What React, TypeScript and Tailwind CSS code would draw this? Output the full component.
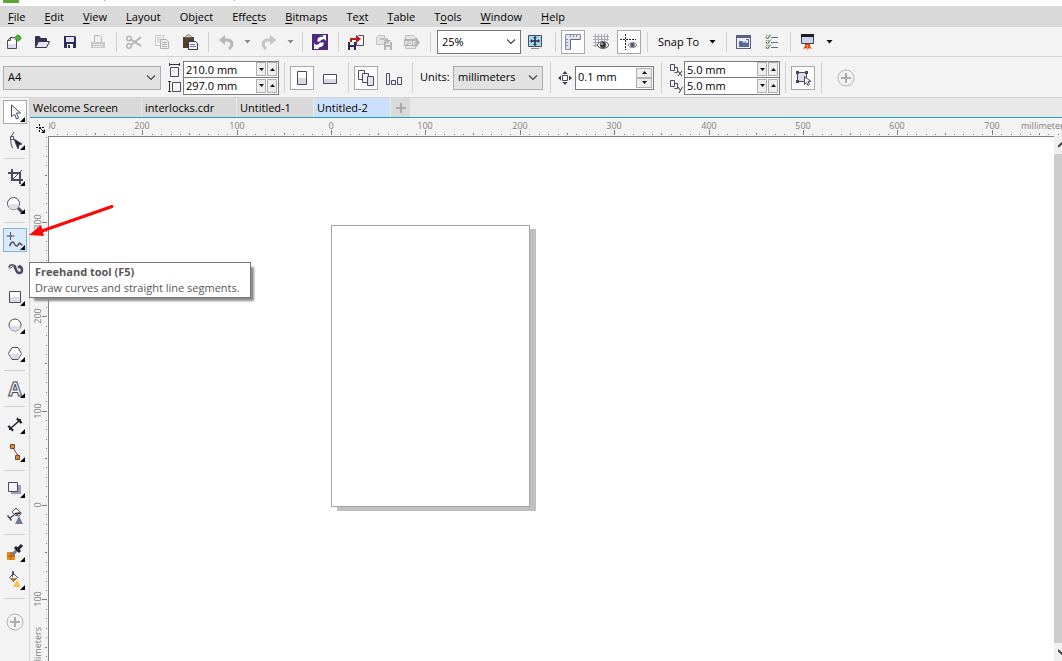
import React from 'react';
import { clsx } from 'clsx';

const INK = '#4a4a62';
const MUTED = '#b4b4b4';

interface IconProps {
  children: React.ReactNode;
  size?: number;
}

const Icon: React.FC<IconProps> = ({ children, size = 16 }) => (
  <svg
    width={size}
    height={size}
    viewBox={`0 0 ${size} ${size}`}
    fill="none"
    stroke={INK}
    className="block shrink-0"
    aria-hidden="true"
  >
    {children}
  </svg>
);

interface ToolButtonProps {
  label: string;
  boxed?: boolean;
  children: React.ReactNode;
}

const ToolButton: React.FC<ToolButtonProps> = ({ label, boxed, children }) => (
  <button type="button" aria-label={label} className="flex h-7 w-7 shrink-0 items-center justify-center">
    <span
      className={clsx(
        'flex h-6 w-6 items-center justify-center border',
        boxed ? 'border-[#a9a9a9] bg-[#fdfdfd]' : 'border-transparent'
      )}
    >
      {children}
    </span>
  </button>
);

const Caret: React.FC<{ color?: string }> = ({ color = '#000' }) => (
  <svg width="7" height="4" viewBox="0 0 7 4" className="shrink-0" aria-hidden="true">
    <path d="M0.5 0h6L3.5 3.5z" fill={color} />
  </svg>
);

const CaretButton: React.FC<{ label: string; wide?: boolean; color?: string }> = ({ label, wide, color }) => (
  <button
    type="button"
    aria-label={label}
    className={clsx('flex h-7 shrink-0 items-center justify-center', wide ? 'w-4' : 'w-3.5')}
  >
    <Caret color={color} />
  </button>
);

const Separator: React.FC<{ className?: string }> = ({ className }) => (
  <div className={clsx('flex w-2 shrink-0 justify-center self-stretch py-1', className)}>
    <div className="w-px bg-[#d0d0d0]" />
  </div>
);

const Chevron: React.FC = () => (
  <svg
    width="10"
    height="6"
    viewBox="0 0 10 6"
    fill="none"
    stroke="#444"
    className="pointer-events-none absolute top-1/2 right-1 -translate-y-1/2"
    aria-hidden="true"
  >
    <path d="M1 0.5l4 4 4-4" strokeWidth="1.2" />
  </svg>
);

interface PickerProps {
  label: string;
  options: string[];
  className: string;
}

const Picker: React.FC<PickerProps> = ({ label, options, className }) => (
  <div className={clsx('relative h-6 shrink-0 border', className)}>
    <select aria-label={label} className="block h-full w-full appearance-none bg-transparent px-1 outline-none">
      {options.map((option) => (
        <option key={option}>{option}</option>
      ))}
    </select>
    <Chevron />
  </div>
);

const SpinArrow: React.FC<{ up?: boolean }> = ({ up }) => (
  <svg width="5" height="3" viewBox="0 0 5 3" aria-hidden="true">
    <path d={up ? 'M0 3h5L2.5 0z' : 'M0 0h5L2.5 3z'} fill="#111" />
  </svg>
);

const SpinField: React.FC<{ label: string; value: string }> = ({ label, value }) => (
  <div className="flex h-4 items-center gap-px bg-white pr-px">
    <input
      aria-label={label}
      defaultValue={value}
      className="h-full w-full min-w-0 flex-1 bg-transparent px-0.5 leading-4 outline-none"
    />
    {[false, true].map((up) => (
      <button
        key={String(up)}
        type="button"
        aria-label={`${up ? 'Increase' : 'Decrease'} ${label}`}
        className="flex h-3.5 w-2.5 items-center justify-center border border-[#b0b0b0] bg-[#eeeeee]"
      >
        <SpinArrow up={up} />
      </button>
    ))}
  </div>
);

const SpinPair: React.FC<{ fields: [string, string][] }> = ({ fields }) => (
  <div className="w-24 shrink-0 divide-y divide-[#7a7a7a] border border-[#7a7a7a]">
    {fields.map(([label, value]) => (
      <SpinField key={label} label={label} value={value} />
    ))}
  </div>
);

/* ---------- menu ---------- */

// [text, index of the underlined letter]
const MENU: [string, number][] = [
  ['File', 0],
  ['Edit', 0],
  ['View', 0],
  ['Layout', 0],
  ['Object', 2],
  ['Effects', 4],
  ['Bitmaps', 0],
  ['Text', 2],
  ['Table', 0],
  ['Tools', 1],
  ['Window', 0],
  ['Help', 0],
];

const TitleBar: React.FC = () => (
  <header className="flex h-1.5 shrink-0 items-end gap-1.5 overflow-hidden bg-white pb-[3px] pl-[3px]">
    <div className="h-4 w-4 shrink-0 bg-[#5aa832]" />
    <span className="leading-4 whitespace-nowrap">CorelDRAW X8 (64-Bit Evaluation Version)</span>
  </header>
);

const MenuBar: React.FC = () => (
  <nav className="flex h-[21px] shrink-0 items-center gap-[19px] bg-[#d9d9d9] pt-px pl-2">
    {MENU.map(([text, key]) => (
      <button key={text} type="button" className="leading-4">
        {text.slice(0, key)}
        <span className="underline underline-offset-2">{text[key]}</span>
        {text.slice(key + 1)}
      </button>
    ))}
  </nav>
);

/* ---------- standard toolbar ---------- */

const StandardBar: React.FC = () => (
  <div className="flex h-[30px] shrink-0 items-center border-b border-[#d4d4d4] bg-[#f3f3f3] pt-px">
    <ToolButton label="New">
      <Icon>
        <path d="M1.5 6.5l3-3h6v11h-9z" fill="#fff" />
        <path d="M2 10h8v4H2z" fill="#dcdce8" stroke="none" />
        <path d="M1.5 6.5h3v-3" />
        <circle cx="12" cy="4" r="3" fill="#2f9a1c" stroke="none" />
        <path d="M12 0v8M8 4h8" stroke="#5cbf45" />
      </Icon>
    </ToolButton>
    <ToolButton label="Open">
      <Icon>
        <path d="M1.5 13.5v-11h4l1 2h6v3" fill="#33334c" stroke="#33334c" />
        <path d="M1.5 13.5l3-6h11l-3 6z" fill="#e6e6f2" stroke="#33334c" />
      </Icon>
    </ToolButton>
    <ToolButton label="Save">
      <Icon>
        <path d="M2 2h11l1 1v11H2z" fill="#2c2c5a" stroke="none" />
        <path d="M4 3h8v5H4z" fill="#e4e4ee" stroke="none" />
        <path d="M5 10h6v4H5z" fill="#fff" stroke="none" />
        <path d="M6 11h2v3H6z" fill="#2c2c5a" stroke="none" />
      </Icon>
    </ToolButton>
    <ToolButton label="Print">
      <Icon>
        <path d="M4.5 8V1.5h5l2 2V8" stroke={MUTED} fill="#efefef" />
        <path d="M1 8h14v6H1z" fill="#c6c6c6" stroke="none" />
        <path d="M3 10.5h10M3 12.5h10" stroke="#e9e9e9" />
      </Icon>
    </ToolButton>
    <Separator />
    <ToolButton label="Cut">
      <Icon>
        <circle cx="3" cy="4.5" r="2.2" stroke={MUTED} strokeWidth="1.5" />
        <circle cx="3" cy="12" r="2.2" stroke={MUTED} strokeWidth="1.5" />
        <path d="M5 5.5L15 12M5 11L15 3" stroke={MUTED} strokeWidth="2" />
      </Icon>
    </ToolButton>
    <ToolButton label="Copy">
      <Icon>
        <path d="M1.5 1.5h8v10h-8zM3 4h5M3 6h3M3 8h3" stroke="#cacaca" />
        <path d="M6.5 5.5h6l2 2v7h-8z" fill="#ececec" stroke={MUTED} />
        <path d="M8 8.5h5M8 10.5h5M8 12.5h5" stroke={MUTED} />
      </Icon>
    </ToolButton>
    <ToolButton label="Paste">
      <Icon>
        <path d="M1 3h11v11H1z" fill="#51402f" stroke="none" />
        <path d="M3.5 3.5C4 0 9 0 9.5 3.5z" fill="#cfe0b8" stroke="#62704f" />
        <path d="M6.5 7.5h7l2 2v6h-9z" fill="#f3f3fa" stroke="#33334c" />
        <path d="M8 10.5h5M8 12.5h6" stroke="#77778f" />
      </Icon>
    </ToolButton>
    <Separator />
    <ToolButton label="Undo">
      <Icon>
        <path d="M1 6l6-5v10z" fill="#b8b8b8" stroke="none" />
        <path d="M6 6h3c5 0 7 5 2 9" stroke="#b8b8b8" strokeWidth="3" />
      </Icon>
    </ToolButton>
    <CaretButton label="Undo list" color="#888" />
    <ToolButton label="Redo">
      <Icon>
        <path d="M16 6l-6-5v10z" fill="#c4c4c4" stroke="none" />
        <path d="M11 6H8c-5 0-7 5-2 9" stroke="#c4c4c4" strokeWidth="3" />
      </Icon>
    </ToolButton>
    <CaretButton label="Redo list" wide color="#888" />
    <Separator />
    <ToolButton label="Search content">
      <Icon>
        <path d="M0 0h16v16H0z" fill="#4d2a78" stroke="none" />
        <path d="M14 1v6l-2-2-3 1-1 2H5l1-4 4-2-2-1z" fill="#fff" stroke="none" />
        <path d="M2 15V9l2 2 3-1 1-2h4l-1 4-5 2 1 1z" fill="#fff" stroke="none" />
        <path d="M11 1H8l2 2zM5 8h7" stroke="#4d2a78" />
      </Icon>
    </ToolButton>
    <Separator />
    <ToolButton label="Import">
      <Icon>
        <path d="M8.5 3.5l2-2h5v10h-7z" fill="#f5f5fb" />
        <path d="M0 8h8v8H0z" fill="#2c2c4c" stroke="none" />
        <path d="M2 8h4v3H2zM2 13h4v3H2z" fill="#e8e8f4" stroke="none" />
        <path d="M3 8V5h6" stroke="#b3201c" strokeWidth="2" />
        <path d="M8 1l5 4-5 4z" fill="#b3201c" stroke="none" />
      </Icon>
    </ToolButton>
    <ToolButton label="Export">
      <Icon>
        <path d="M0.5 3.5l2-2h6v9h-8z" fill="#e4e4e4" stroke="#c4c4c4" />
        <path d="M8 8h8v8H8z" fill="#b4b4b4" stroke="none" />
        <path d="M10 8h4v3h-4zM10 13h4v3h-4z" fill="#eee" stroke="none" />
        <path d="M4 5h7v2" stroke="#c0c0c0" strokeWidth="2" />
        <path d="M8 6h7l-3.5 4z" fill={MUTED} stroke="none" />
      </Icon>
    </ToolButton>
    <ToolButton label="Publish to PDF">
      <Icon>
        <path d="M1.5 1.5h8l2 2v11h-10z" fill="#e4e4e4" stroke="#c0c0c0" />
        <path d="M0 5h12V3l4 5.5-4 5V12H0z" fill="#b4b4b4" stroke="none" />
        <text x="0.5" y="11" fontSize="6" fontWeight="700" fill="#f0f0f0" stroke="none">
          PDF
        </text>
      </Icon>
    </ToolButton>
    <Separator />
    <Picker label="Zoom level" options={['25%']} className="ml-[3px] w-[84px] border-[#777777] bg-white" />
    <ToolButton label="Full-screen preview">
      <Icon>
        <path d="M1.5 1.5h13v11h-13z" fill="#a9d8ea" />
        <path d="M8 3v8M4 7h8" stroke="#1f2f4f" strokeWidth="1.5" />
        <path d="M8 2l2 2H6zM8 12l2-2H6zM3 7l2-2v4zM13 7l-2-2v4z" fill="#1f2f4f" stroke="none" />
        <path d="M4 14.5h8" stroke="#8c8ca0" />
      </Icon>
    </ToolButton>
    <Separator className="ml-0.5" />
    <ToolButton label="Show rulers" boxed>
      <Icon>
        <path d="M0.5 0.5h15v5h-10v10h-5z" fill="#dde3ef" stroke="#8890aa" />
        <path d="M5.5 1v2M8.5 1v2M11.5 1v2M1 5.5h2M1 8.5h2M1 11.5h2" stroke="#8890aa" />
        <path d="M5.5 15V5.5H15" stroke="#5d6480" />
      </Icon>
    </ToolButton>
    <ToolButton label="Show grid">
      <Icon>
        <path d="M2.5 0v13M5.5 0v13M8.5 0v7M11.5 0v7M14.5 0v7M0 2.5h16M0 5.5h16M0 8.5h6M0 11.5h5" stroke="#a9a9b9" />
        <path d="M4 11c2-4.500 10-4.500 12 0-2 4.500-10 4.500-12 0z" fill="#eee" stroke="#444" />
        <circle cx="10" cy="11" r="3" fill="#3a3a3a" stroke="none" />
        <circle cx="9" cy="10" r="1" fill="#bbb" stroke="none" />
      </Icon>
    </ToolButton>
    <ToolButton label="Show guidelines" boxed>
      <Icon size={18}>
        <path d="M5.5 1v16M0 6.500h16" stroke="#222" strokeDasharray="2 1" />
        <path d="M8 12c2-3.500 7-3.500 9 0-2 3.500-7 3.500-9 0z" fill="#e4e4ea" stroke="#8a8a96" />
        <circle cx="12.5" cy="12" r="2.3" fill="#5a5a68" stroke="none" />
      </Icon>
    </ToolButton>
    <Separator />
    <button
      type="button"
      className="flex h-7 w-[71px] shrink-0 items-center justify-between pr-1.5 pl-[7px] whitespace-nowrap"
    >
      Snap To
      <Caret />
    </button>
    <Separator />
    <ToolButton label="Welcome screen">
      <Icon>
        <path d="M0 1h15v14H0z" fill="#5b6080" stroke="none" />
        <path d="M1 4h13v10H1z" fill="#e9ebf5" stroke="none" />
        <path d="M3 7h3l2 2 2-2V5h3v8H3z" fill="#5b6a95" stroke="none" />
        <path d="M10 6h2v3h-2z" fill="#dfe6f4" stroke="none" />
      </Icon>
    </ToolButton>
    <ToolButton label="Options">
      <Icon>
        <path d="M7 3.500h7M7 8.500h7M7 13.500h7" stroke="#6c6c7c" />
        <path d="M2 1.500h3v3H2zM2 6.500h3v3H2zM2 11.500h3v3H2z" stroke="#a5b5a5" />
        <path d="M2 3l1.500 1.500L7 0.500M2 8l1.500 1.500L7 5.500M2 13l1.500 1.500L7 10.500" stroke="#3e8c3a" />
      </Icon>
    </ToolButton>
    <Separator />
    <ToolButton label="Application launcher">
      <Icon>
        <path d="M1.5 0.500h12v9h-12z" fill="#cfd3e2" stroke="#3c3f5c" />
        <path d="M1 0h13v3H1z" fill="#1c1d33" stroke="none" />
        <path d="M5 10h5v2l2 3-3-1-1.500 2L6 14l-3 1 2-3z" fill="#e2481c" stroke="none" />
        <path d="M7 11h1v4H7z" fill="#ffc21a" stroke="none" />
      </Icon>
    </ToolButton>
    <CaretButton label="Launcher list" />
  </div>
);

/* ---------- property bar ---------- */

const SpacingIcon: React.FC<{ axis: string }> = ({ axis }) => (
  <Icon size={14}>
    <path d="M1.5 1.500h4v6h-4zM5.500 4.500h3v5h-3" fill="#f4f4fa" />
    {axis === 'x' ? <path d="M9 8l4 5M13 8l-4 5" stroke="#333" /> : <path d="M9 8l2 3M13.500 8l-3.500 6" stroke="#333" />}
  </Icon>
);

const AddCircle: React.FC = () => (
  <Icon size={18}>
    <circle cx="9" cy="9" r="8" stroke="#b3b3b3" />
    <path d="M9 4v10M4 9h10" stroke="#adadad" strokeWidth="2" />
  </Icon>
);

const PropertyBar: React.FC = () => (
  <div className="flex h-[41px] shrink-0 items-center border-b border-[#d4d4d4] bg-[#f3f3f3] pt-px pl-[3px]">
    <Picker label="Page size" options={['A4']} className="w-[158px] border-[#adadad] bg-[#e2e2e2]" />
    <div className="ml-[7px] flex w-[15px] shrink-0 flex-col gap-0.5">
      <Icon size={14}>
        <path d="M2.5 4.500h8v9h-8z" fill="#f4f4fa" />
        <path d="M2 1.500h9M1.500 0v3M11.500 0v3" stroke="#333" />
      </Icon>
      <Icon size={14}>
        <path d="M4.5 3.500h8v9h-8z" fill="#f4f4fa" />
        <path d="M1.5 3v9M0 2.500h3M0 12.500h3" stroke="#333" />
      </Icon>
    </div>
    <SpinPair fields={[['Page width', '210.0 mm'], ['Page height', '297.0 mm']]} />
    <Separator className="ml-px" />
    <ToolButton label="Portrait" boxed>
      <Icon>
        <path d="M3.5 1.500h9v13h-9z" fill="#fff" />
        <path d="M4 8h8v6H4z" fill="#d9d9e6" stroke="none" />
      </Icon>
    </ToolButton>
    <ToolButton label="Landscape">
      <Icon>
        <path d="M1.5 4.500h13v9h-13z" fill="#fff" />
        <path d="M2 9h12v4H2z" fill="#d9d9e6" stroke="none" />
      </Icon>
    </ToolButton>
    <Separator />
    <ToolButton label="All pages" boxed>
      <Icon size={18}>
        <path d="M1.5 1.500h6v9h-6z" fill="#fff" />
        <path d="M5.5 4.500h6v9h-6z" fill="#eeeef6" />
        <path d="M10.5 7.500h6v9h-6z" fill="#e2e2ee" />
      </Icon>
    </ToolButton>
    <ToolButton label="Current page">
      <Icon size={18}>
        <path d="M1.5 4.500h3v11h-3zM6.500 11.500h4v4h-4zM12.500 8.500h4v7h-4z" fill="#eeeef6" />
      </Icon>
    </ToolButton>
    <Separator />
    <span className="ml-1 w-[33px] shrink-0 whitespace-nowrap">Units:</span>
    <Picker label="Units" options={['millimeters']} className="w-[90px] border-[#adadad] bg-[#e2e2e2]" />
    <Separator className="mx-[3px]" />
    <label htmlFor="nudge" className="mr-[3px] ml-px shrink-0" aria-label="Nudge distance">
      <Icon size={14}>
        <path d="M4.5 4.500h5v5h-5z" fill="#fff" />
        <path d="M7 0l2.500 3h-5zM7 14l2.500-3h-5zM0 7l3-2.500v5zM14 7l-3-2.500v5z" fill="#3c3c50" stroke="none" />
      </Icon>
    </label>
    <div className="flex h-6 w-[79px] shrink-0 items-center border border-[#7a7a7a] bg-white pr-px">
      <input id="nudge" defaultValue="0.1 mm" className="w-full min-w-0 flex-1 bg-transparent px-0.5 outline-none" />
      <div className="flex flex-col">
        {[true, false].map((up) => (
          <button
            key={String(up)}
            type="button"
            aria-label={up ? 'Increase nudge' : 'Decrease nudge'}
            className="flex h-2.5 w-4 items-center justify-center border border-[#b0b0b0] bg-[#eeeeee]"
          >
            <SpinArrow up={up} />
          </button>
        ))}
      </div>
    </div>
    <Separator className="mx-[3px]" />
    <div className="flex shrink-0 flex-col gap-0.5 pr-px pl-px">
      <SpacingIcon axis="x" />
      <SpacingIcon axis="y" />
    </div>
    <SpinPair fields={[['Duplicate X', '5.0 mm'], ['Duplicate Y', '5.0 mm']]} />
    <Separator className="ml-px" />
    <ToolButton label="Treat as filled" boxed>
      <Icon size={18}>
        <path d="M3.5 3.500h9v9h-9z" fill="#dcdce8" />
        <path d="M2 2h3v3H2zM11 2h3v3h-3zM2 11h3v3H2z" fill="#444458" stroke="none" />
        <path d="M10.5 7.500v8l2-2 1.500 3 1.500-1-1.500-3h3z" fill="#fff" />
      </Icon>
    </ToolButton>
    <Separator />
    <div className="ml-[7px]">
      <ToolButton label="Customize">
        <AddCircle />
      </ToolButton>
    </div>
  </div>
);

/* ---------- toolbox ---------- */

interface Tool {
  label: string;
  icon: React.ReactNode;
  flyout?: boolean;
  state?: 'boxed' | 'hover';
}

const TOOL_GROUPS: Tool[][] = [
  [
    {
      label: 'Pick tool',
      flyout: true,
      state: 'boxed',
      icon: <path d="M8.5 5v12l3-3 2 5 2-1-2-5h4z" fill="#fff" />,
    },
    {
      label: 'Shape tool',
      flyout: true,
      icon: (
        <>
          <path d="M11 4C7 9 7 14 9.500 20" />
          <path d="M7.5 8.500h3v3h-3z" fill="#fff" />
          <path d="M11 11l8 5-3 1-1 4z" fill="#22222e" />
        </>
      ),
    },
  ],
  [
    {
      label: 'Crop tool',
      flyout: true,
      icon: (
        <>
          <path d="M5 9h12v11M9 5v11h11" strokeWidth="2" />
          <path d="M8 17L19 6" />
        </>
      ),
    },
    {
      label: 'Zoom tool',
      flyout: true,
      icon: (
        <>
          <path d="M15 16l5 5" strokeWidth="3" />
          <circle cx="10.5" cy="11.500" r="6" fill="#fff" />
          <path d="M5 12h11a5 5 0 0 1-11 0z" fill="#e0e0ea" stroke="none" />
        </>
      ),
    },
  ],
  [
    {
      label: 'Freehand tool',
      flyout: true,
      state: 'hover',
      icon: (
        <>
          <path d="M7.5 4v8M3.500 8h8" />
          <circle cx="7.500" cy="8" r="1" fill="#dbeaf8" />
          <path d="M6.5 18c1-1 1-4 3-4s2 4 4 4 2-3 3-3 1 2 3 2" strokeWidth="1.500" />
        </>
      ),
    },
    {
      label: 'Artistic media tool',
      icon: (
        <>
          <path d="M6 11c1-3 5-3 7 0" strokeWidth="1.500" />
          <path d="M11 10c2 2 2 7 5 7 4 0 4-6 0-7" strokeWidth="2.500" />
          <circle cx="16" cy="11" r="1.500" fill={INK} stroke="none" />
          <path d="M6 11c0 2 3 1 4-1" />
        </>
      ),
    },
    {
      label: 'Rectangle tool',
      flyout: true,
      icon: (
        <>
          <path d="M6.5 7.500h11v11h-11z" fill="#fff" />
          <path d="M7 13h10v5H7z" fill="#dcdce8" stroke="none" />
        </>
      ),
    },
    {
      label: 'Ellipse tool',
      flyout: true,
      icon: (
        <>
          <circle cx="12" cy="13" r="6" fill="#fff" />
          <path d="M6.5 14h11a5.500 5 0 0 1-11 0z" fill="#dcdce8" stroke="none" />
        </>
      ),
    },
    {
      label: 'Polygon tool',
      flyout: true,
      icon: (
        <>
          <path d="M5.5 13.500l3.500-6h6l3.500 6-3.500 6H9z" fill="#fff" />
          <path d="M6 14h12l-3 5H9z" fill="#dcdce8" stroke="none" />
        </>
      ),
    },
  ],
  [
    {
      label: 'Text tool',
      flyout: true,
      icon: (
        <text x="12" y="20" textAnchor="middle" fontSize="19" fontWeight="700" fill="#f3f3f3" strokeWidth="1">
          A
        </text>
      ),
    },
  ],
  [
    {
      label: 'Dimension tool',
      flyout: true,
      icon: (
        <>
          <path d="M8 16l8-7M5 14l5 5M14 6l5 5" stroke="#22222e" strokeWidth="1.500" />
          <path d="M6 18v-5l5 5zM18 7v5l-5-5z" fill="#22222e" stroke="none" />
        </>
      ),
    },
    {
      label: 'Connector tool',
      flyout: true,
      icon: (
        <>
          <path d="M10 8l6 9" />
          <path d="M7.500 4.500h4v4h-4zM12.500 15.500h4v4h-4z" fill="#e08a2c" stroke="#7c4a20" />
        </>
      ),
    },
  ],
  [
    {
      label: 'Drop shadow tool',
      flyout: true,
      icon: (
        <>
          <path d="M8 9h10v9H8z" fill="#9a9ab4" stroke="none" />
          <path d="M5.5 6.500h9v9h-9z" fill="#f4f4fa" />
        </>
      ),
    },
    {
      label: 'Transparency tool',
      icon: (
        <>
          <path d="M9 8l4-4 5 5c0 3-5 4-7 1z" fill="#fff" />
          <path d="M11 9l7-1c-1 3-5 4-7 1z" fill="#33334c" stroke="none" />
          <path d="M11 11l-4 3M4.500 11.500l4 5" strokeWidth="1.500" />
          <path d="M16 12l4 8h-8z" fill="#6f7894" stroke="none" />
        </>
      ),
    },
  ],
  [
    {
      label: 'Color eyedropper tool',
      flyout: true,
      icon: (
        <>
          <path d="M4 12h8v8H4z" fill="#f08c14" stroke="none" />
          <path d="M8 12v8M4 16h8" stroke="#a85c10" />
          <path d="M9 15l6-6" stroke="#77778a" strokeWidth="3" />
          <path d="M12 7l5 5M15 9l4-4" stroke="#22222e" strokeWidth="3" />
        </>
      ),
    },
    {
      label: 'Interactive fill tool',
      flyout: true,
      icon: (
        <>
          <path d="M6.5 9.500l4-4 4 4-4 4z" fill="#f4f4fa" />
          <path d="M7 10h7l-3.500 3.500z" fill="#c47a1e" stroke="none" />
          <path d="M9.500 9V3.500h1V7" />
          <path d="M14 12l4 7h-8z" fill="#f6c04a" stroke="none" />
        </>
      ),
    },
  ],
];

const Toolbox: React.FC = () => (
  <aside className="flex w-[30px] shrink-0 flex-col items-center border-r border-[#d4d4d4] bg-[#f3f3f3]">
    {TOOL_GROUPS.map((group) => (
      <React.Fragment key={group[0].label}>
        {group.map(({ label, icon, flyout, state }) => (
          <button key={label} type="button" aria-label={label} className="flex h-7 items-center">
            <span
              className={clsx(
                'flex h-6 w-6 items-center justify-center',
                state === 'boxed' && 'bg-white outline outline-[#a9a9a9] -outline-offset-1',
                state === 'hover' && 'bg-[#dbeaf8] outline outline-[#7fb2dc] -outline-offset-1'
              )}
            >
              <Icon size={24}>
                {icon}
                {flyout && <path d="M22 17v5h-5z" fill="#000" stroke="none" />}
              </Icon>
            </span>
          </button>
        ))}
        <div className="flex h-2 w-full items-center px-1">
          <div className="h-px w-full bg-[#d0d0d0]" />
        </div>
      </React.Fragment>
    ))}
    <button type="button" aria-label="Customize toolbox" className="mt-1.5 flex h-7 items-center">
      <AddCircle />
    </button>
  </aside>
);

/* ---------- document area ---------- */

const TABS = [
  { name: 'Welcome Screen', width: 'w-28' },
  { name: 'interlocks.cdr', width: 'w-[95px]' },
  { name: 'Untitled-1', width: 'w-[77px]' },
  { name: 'Untitled-2', width: 'w-[77px]', active: true },
];

const TabStrip: React.FC = () => (
  <div className="flex h-5 shrink-0 border-b border-[#1f9fca] bg-[#e8e8e8]">
    {TABS.map(({ name, width, active }) => (
      <button
        key={name}
        type="button"
        className={clsx(
          'shrink-0 border-r border-[#e8e8e8] pl-[3px] text-left leading-4 whitespace-nowrap',
          width,
          active ? 'bg-[#cce0fb]' : 'bg-[#d9d9d9]'
        )}
      >
        {name}
      </button>
    ))}
    <button type="button" aria-label="New tab" className="flex w-[19px] items-center justify-center bg-[#d9d9d9]">
      <svg width="12" height="12" viewBox="0 0 12 12" aria-hidden="true">
        <path d="M6 1v10M1 6h10" stroke="#a9a9a9" strokeWidth="2" />
      </svg>
    </button>
  </div>
);

// 100 mm on the ruler at 25% zoom
const STEP = 94.4;

const tickLength = (i: number) => (i % 10 === 0 ? 5 : i % 5 === 0 ? 2 : 1);

const HorizontalRuler: React.FC = () => (
  <svg height="18" className="block min-w-0 flex-1 overflow-hidden" aria-hidden="true">
    {Array.from({ length: 120 }, (_, n) => n - 30).map((i) => {
      const x = Math.round(282 + (i * STEP) / 10);
      return (
        <React.Fragment key={i}>
          <rect x={x} y={17 - tickLength(i)} width="1" height={tickLength(i)} fill="#808080" />
          {i % 10 === 0 && i <= 70 && (
            <text x={x} y="11" textAnchor="middle" fontSize="9" fill="#808080">
              {Math.abs(i * 10)}
            </text>
          )}
        </React.Fragment>
      );
    })}
    <text x="972" y="11" fontSize="9" fill="#808080">
      millimeters
    </text>
  </svg>
);

const VerticalRuler: React.FC = () => (
  <svg width="18" className="block h-full shrink-0 overflow-hidden" aria-hidden="true">
    {Array.from({ length: 60 }, (_, n) => n - 20).map((i) => {
      const y = Math.round(369 - (i * STEP) / 10);
      return (
        <React.Fragment key={i}>
          <rect x={17 - tickLength(i)} y={y} width={tickLength(i)} height="1" fill="#808080" />
          {i % 10 === 0 && (
            <text transform={`translate(11 ${y}) rotate(-90)`} textAnchor="middle" fontSize="9" fill="#808080">
              {Math.abs(i * 10)}
            </text>
          )}
        </React.Fragment>
      );
    })}
    <text transform="translate(11 491) rotate(-90)" textAnchor="end" fontSize="9" fill="#808080">
      millimeters
    </text>
  </svg>
);

const ScrollBar: React.FC = () => (
  <div className="flex w-2 shrink-0 flex-col overflow-hidden bg-[#f0f0f0]">
    <button type="button" aria-label="Scroll up" className="flex h-[18px] items-center pl-1">
      <svg width="8" height="6" viewBox="0 0 8 6" className="shrink-0" aria-hidden="true">
        <path d="M0 5l4-4 4 4" fill="none" stroke="#444" strokeWidth="2" />
      </svg>
    </button>
    <div className="flex-1 bg-[#cdcdcd]" />
    <button type="button" aria-label="Scroll down" className="flex h-[18px] items-center pl-1">
      <svg width="8" height="6" viewBox="0 0 8 6" className="shrink-0" aria-hidden="true">
        <path d="M0 1l4 4 4-4" fill="none" stroke="#444" strokeWidth="2" />
      </svg>
    </button>
  </div>
);

const Tooltip: React.FC = () => (
  <div
    role="tooltip"
    className="absolute top-[164px] left-[29px] border border-[#767676] bg-white py-px pr-2.5 pl-[5px] leading-4 whitespace-nowrap text-[#575757] shadow-[4px_4px_2px_-1px_#8c8c8c]"
  >
    <p className="font-bold">Freehand tool (F5)</p>
    <p>Draw curves and straight line segments.</p>
  </div>
);

const Workspace: React.FC = () => (
  <div className="relative flex min-h-0 flex-1">
    <Toolbox />
    <main className="flex min-w-0 flex-1 flex-col">
      <TabStrip />
      <div className="flex h-[18px] shrink-0 bg-[#f3f3f3]">
        <div className="flex w-[19px] shrink-0 items-end justify-end pr-px">
          <svg width="12" height="12" viewBox="0 0 12 12" fill="none" stroke="#111" aria-hidden="true">
            <path d="M0 3.500h8M3.500 0v8" strokeDasharray="2 1" />
            <path d="M4 4l4 4" />
            <path d="M9 5v4H5z" fill="#111" stroke="none" />
          </svg>
        </div>
        <HorizontalRuler />
      </div>
      <div className="flex min-h-0 flex-1">
        <div className="w-[19px] shrink-0 border-r border-[#808080] bg-[#f3f3f3]">
          <VerticalRuler />
        </div>
        <div className="relative min-w-0 flex-1 overflow-hidden border-t border-[#808080] bg-white">
          <div className="absolute top-[88px] left-[282px] h-[282px] w-[199px] border border-[#a6a6a6] bg-white shadow-[6px_4px_0_0_#c0c0c0]" />
        </div>
        <ScrollBar />
      </div>
    </main>
    <svg
      width="86"
      height="36"
      viewBox="0 0 86 36"
      className="pointer-events-none absolute top-[106px] left-[29px]"
      aria-hidden="true"
    >
      <path d="M83 2.500L10 28" stroke="#fb0808" strokeWidth="3" strokeLinecap="round" />
      <path d="M0 31L12 21l3 11z" fill="#fb0808" />
    </svg>
    <Tooltip />
  </div>
);

const App: React.FC = () => (
  <div className="flex h-screen flex-col overflow-hidden bg-white font-['Open_Sans','Noto_Sans',sans-serif] text-[11px] text-black">
    <TitleBar />
    <MenuBar />
    <StandardBar />
    <PropertyBar />
    <Workspace />
  </div>
);

export default App;
